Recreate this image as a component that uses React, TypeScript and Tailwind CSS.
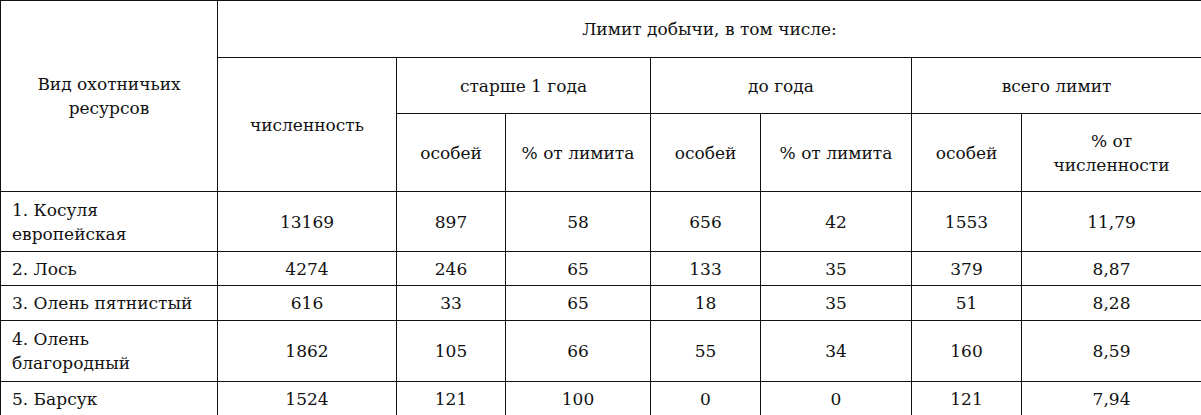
import React from "react";

const rows = [
  { name: ["1. Косуля", "европейская"], h: "h-[60px]", v: ["13169", "897", "58", "656", "42", "1553", "11,79"] },
  { name: ["2. Лось"], h: "h-[34px]", v: ["4274", "246", "65", "133", "35", "379", "8,87"] },
  { name: ["3. Олень пятнистый"], h: "h-[35px]", v: ["616", "33", "65", "18", "35", "51", "8,28"] },
  { name: ["4. Олень", "благородный"], h: "h-[61px]", v: ["1862", "105", "66", "55", "34", "160", "8,59"] },
  { name: ["5. Барсук"], h: "h-[34px]", v: ["1524", "121", "100", "0", "0", "121", "7,94"] },
];

const cell = "border border-[#111] text-center align-middle p-0";

export default function App() {
  return (
    <div className="w-[1201px] h-[415px] bg-white overflow-hidden text-[#111] text-[17px] leading-[24px] font-['DejaVu_Serif',serif]">
      <table className="w-[1201px] table-fixed border-collapse">
        <colgroup>
          <col className="w-[217px]" />
          <col className="w-[179px]" />
          <col className="w-[109px]" />
          <col className="w-[145px]" />
          <col className="w-[110px]" />
          <col className="w-[151px]" />
          <col className="w-[110px]" />
          <col className="w-[180px]" />
        </colgroup>
        <thead>
          <tr className="h-[57px]">
            <th rowSpan={3} className={`${cell} font-normal`}>
              Вид охотничьих
              <br />
              ресурсов
            </th>
            <th colSpan={7} className={`${cell} font-normal`}>Лимит добычи, в том числе:</th>
          </tr>
          <tr className="h-[56px]">
            <th rowSpan={2} className={`${cell} font-normal`}>численность</th>
            <th colSpan={2} className={`${cell} font-normal`}>старше 1 года</th>
            <th colSpan={2} className={`${cell} font-normal`}>до года</th>
            <th colSpan={2} className={`${cell} font-normal`}>всего лимит</th>
          </tr>
          <tr className="h-[78px]">
            <th className={`${cell} font-normal`}>особей</th>
            <th className={`${cell} font-normal`}>% от лимита</th>
            <th className={`${cell} font-normal`}>особей</th>
            <th className={`${cell} font-normal`}>% от лимита</th>
            <th className={`${cell} font-normal`}>особей</th>
            <th className={`${cell} font-normal`}>
              % от
              <br />
              численности
            </th>
          </tr>
        </thead>
        <tbody>
          {rows.map((r, i) => (
            <tr key={i} className={r.h}>
              <td className={`${cell} text-left pl-[11px]`}>
                {r.name.map((n, j) => (
                  <div key={j}>{n}</div>
                ))}
              </td>
              {r.v.map((v, j) => (
                <td key={j} className={cell}>{v}</td>
              ))}
            </tr>
          ))}
        </tbody>
      </table>
    </div>
  );
}
